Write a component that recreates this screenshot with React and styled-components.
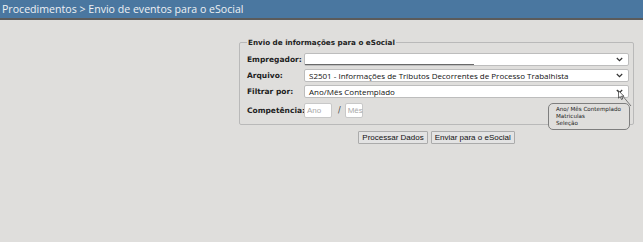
import React from 'react';
import styled, { createGlobalStyle } from 'styled-components';

const GlobalStyle = createGlobalStyle`
  html, body {
    margin: 0;
    padding: 0;
    background: #dfdedc;
    height: 100%;
  }
  body {
    font-family: 'DejaVu Sans', Verdana, sans-serif;
  }
`;

const fields = [
  { label: 'Empregador:', value: '', loading: true },
  { label: 'Arquivo:', value: 'S2501 - Informações de Tributos Decorrentes de Processo Trabalhista' },
  { label: 'Filtrar por:', value: 'Ano/Mês Contemplado', hover: true },
];

const tooltipLines = ['Ano/ Mês Contemplado', 'Matriculas', 'Seleção'];

const Chevron = () => (
  <svg width="7" height="5" viewBox="0 0 7 5">
    <path d="M0.8 1 L3.5 3.7 L6.2 1" fill="none" stroke="#333" strokeWidth="1.2" />
  </svg>
);

const Cursor = () => (
  <svg width="7" height="11" viewBox="0 0 8 12">
    <path d="M0.5 0.5 L0.5 9 L2.6 7.2 L4 10.5 L5.4 9.9 L4 6.8 L6.8 6.8 Z" fill="#fff" stroke="#222" strokeWidth="0.8" />
  </svg>
);

export default function App() {
  return (
    <>
      <GlobalStyle />
      <Header>Procedimentos &gt; Envio de eventos para o eSocial</Header>
      <Content>
        <Panel>
          <Fieldset>
            <Legend>Envio de informações para o eSocial</Legend>
            {fields.map((f) => (
              <Row key={f.label}>
                <Label>{f.label}</Label>
                <Select>
                  <span>{f.value}</span>
                  <Chevron />
                  {f.loading && <LoadingLine />}
                  {f.hover && (
                    <>
                      <Leader width="11" height="13" viewBox="0 0 11 13">
                        <line x1="0.5" y1="0.5" x2="10" y2="12" stroke="#777" strokeWidth="1" />
                      </Leader>
                      <CursorWrap>
                        <Cursor />
                      </CursorWrap>
                    </>
                  )}
                </Select>
              </Row>
            ))}
            <Row tall>
              <Label>Competência:</Label>
              <SmallInput width={28}>Ano</SmallInput>
              <Slash>/</Slash>
              <SmallInput width={18}>Mês</SmallInput>
            </Row>
            <Tooltip>
              {tooltipLines.map((line) => (
                <div key={line}>{line}</div>
              ))}
            </Tooltip>
          </Fieldset>
          <Buttons>
            <Button>Processar Dados</Button>
            <Button>Enviar para o eSocial</Button>
          </Buttons>
        </Panel>
      </Content>
    </>
  );
}

const Header = styled.div`
  height: 18px;
  line-height: 19px;
  background: #4a77a0;
  border-bottom: 2px solid #5b5b5b;
  color: #eef1f4;
  font-family: 'Open Sans', 'Noto Sans', sans-serif;
  font-size: 10.6px;
  padding-left: 2px;
  white-space: nowrap;
`;

const Content = styled.div`
  display: flex;
  padding: 18px 0 0 239px;
`;

const Panel = styled.div`
  width: 395px;
  display: flex;
  flex-direction: column;
`;

const Fieldset = styled.fieldset`
  position: relative;
  margin: 0;
  padding: 6px 3px 6px 7px;
  border: 1px solid #b9b9b9;
  border-radius: 2px;
  display: flex;
  flex-direction: column;
  gap: 3px;
`;

const Legend = styled.legend`
  font-size: 7.2px;
  font-weight: bold;
  color: #222;
  padding: 0 1px;
  margin-left: 0;
`;

const Row = styled.div`
  display: flex;
  align-items: center;
  height: ${({ tall }) => (tall ? '16px' : '13px')};
  margin-top: ${({ tall }) => (tall ? '1px' : '0')};
`;

const Label = styled.label`
  width: 57px;
  flex: none;
  font-size: 7.5px;
  font-weight: bold;
  color: #222;
  white-space: nowrap;
`;

const Select = styled.div`
  position: relative;
  width: 325px;
  height: 13px;
  box-sizing: border-box;
  background: #fff;
  border: 1px solid #bdbdbd;
  border-radius: 2px;
  display: flex;
  align-items: center;
  justify-content: space-between;
  padding: 0 5px 0 4px;
  font-family: 'Open Sans', 'Noto Sans', sans-serif;
  font-size: 8px;
  color: #111;
  white-space: nowrap;
`;

const LoadingLine = styled.div`
  position: absolute;
  left: 0;
  bottom: 0;
  width: 169px;
  height: 1px;
  background: #6a6a6a;
`;

const CursorWrap = styled.div`
  position: absolute;
  right: 3px;
  top: 4px;
  line-height: 0;
`;

const Leader = styled.svg`
  position: absolute;
  right: -4px;
  top: 8px;
`;

const SmallInput = styled.div`
  width: ${({ width }) => width}px;
  height: 15px;
  box-sizing: border-box;
  background: #fff;
  border: 1px solid #c8c8c8;
  border-radius: 2px;
  font-family: 'Liberation Sans', Arial, sans-serif;
  font-size: 8px;
  color: #a9a9a9;
  padding-left: 2px;
  line-height: 13px;
`;

const Slash = styled.span`
  font-size: 8px;
  color: #444;
  margin: 0 4px 0 6px;
`;

const Tooltip = styled.div`
  position: absolute;
  left: 308px;
  top: 56px;
  width: 82px;
  height: 27px;
  box-sizing: border-box;
  background: #dfdedc;
  border: 1px solid #7e7e7e;
  border-radius: 5px;
  padding: 2px 0 0 7px;
  font-family: 'DejaVu Sans', sans-serif;
  font-size: 5.6px;
  line-height: 7px;
  color: #222;
  white-space: nowrap;
`;

const Buttons = styled.div`
  display: flex;
  justify-content: center;
  gap: 3px;
  margin-top: 6px;
`;

const Button = styled.button`
  height: 13px;
  padding: 0 3px;
  background: #e3e3e3;
  border: 1px solid #ababab;
  border-radius: 1px;
  font-family: 'Liberation Sans', Arial, sans-serif;
  font-size: 8px;
  color: #111;
  line-height: 11px;
`;
